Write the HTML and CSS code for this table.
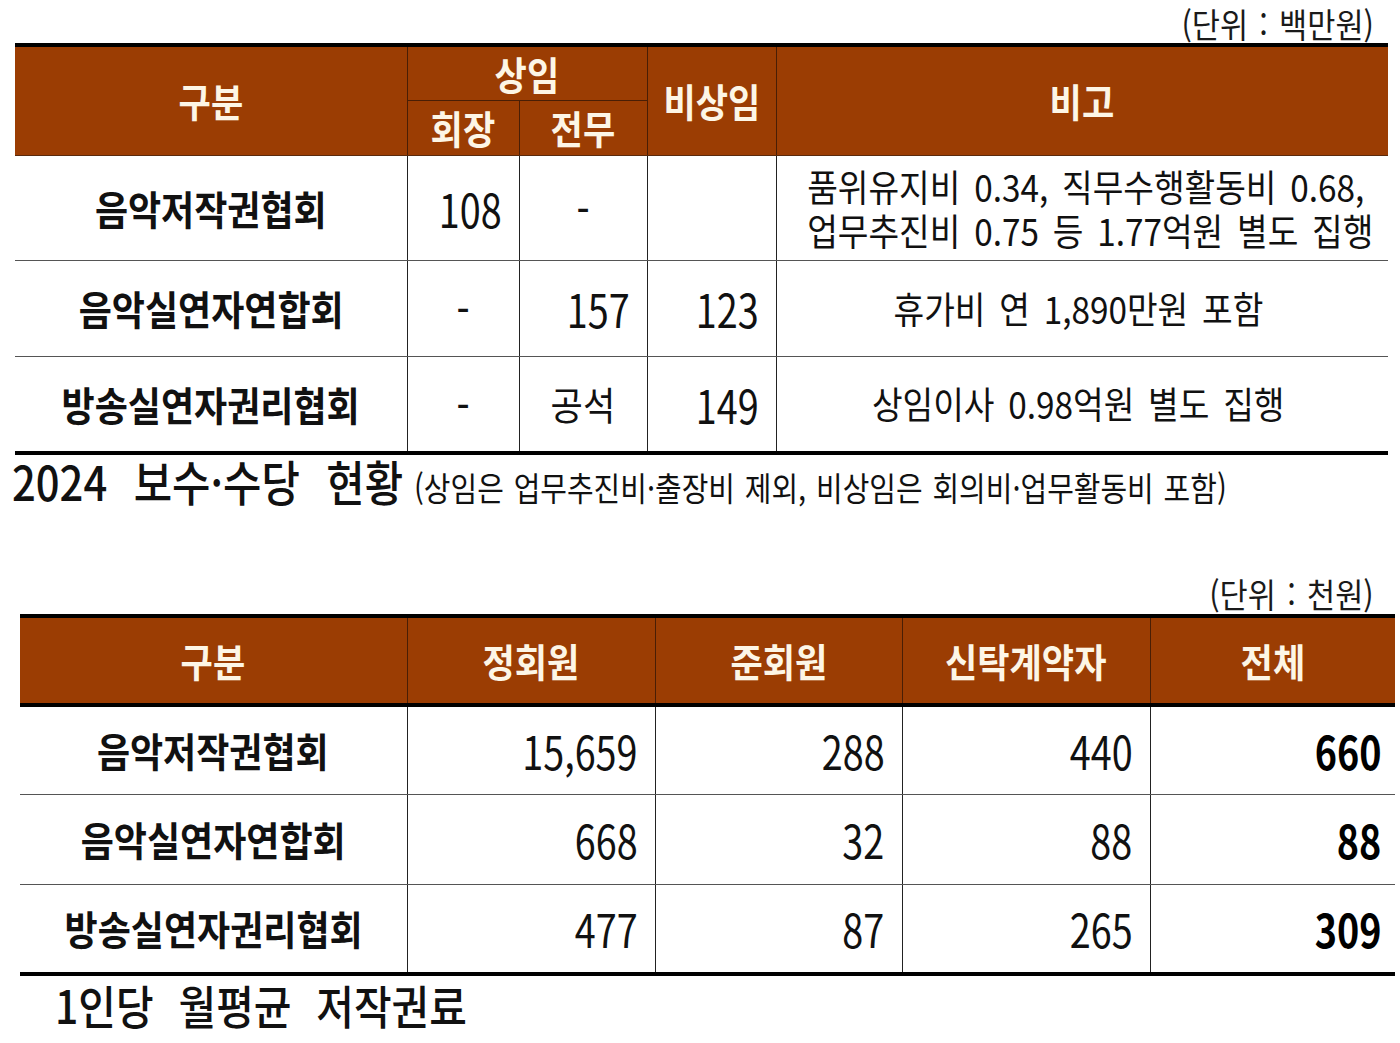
FILE: index.html
```html
<!DOCTYPE html>
<html lang="ko">
<head>
<meta charset="utf-8">
<title>보수·수당 현황</title>
<link rel="stylesheet" href="styles.css">
</head>
<body>
<div class="page">
  <div class="unit unit1"><span class="sx orr">(단위 : 백만원)</span></div>
  <table class="tbl t1">
    <colgroup>
      <col class="a1"><col class="a2"><col class="a3"><col class="a4"><col class="a5">
    </colgroup>
    <thead>
      <tr class="h1">
        <th rowspan="2"><span class="sx">구분</span></th>
        <th colspan="2" class="grp"><span class="sx">상임</span></th>
        <th rowspan="2"><span class="sx">비상임</span></th>
        <th rowspan="2"><span class="sx">비고</span></th>
      </tr>
      <tr class="h2">
        <th><span class="sx">회장</span></th>
        <th><span class="sx">전무</span></th>
      </tr>
    </thead>
    <tbody>
      <tr class="r1">
        <td class="name"><span class="sx">음악저작권협회</span></td>
        <td class="num rt"><span class="sx nx orr">108</span></td>
        <td class="num ctr"><span class="sx nx">-</span></td>
        <td class="num"></td>
        <td class="note"><div class="sx">품위유지비 0.34, 직무수행활동비 0.68,</div><div class="sx">업무추진비 0.75 등 1.77억원 별도 집행</div></td>
      </tr>
      <tr class="r2">
        <td class="name"><span class="sx">음악실연자연합회</span></td>
        <td class="num ctr"><span class="sx nx">-</span></td>
        <td class="num rt"><span class="sx nx orr">157</span></td>
        <td class="num rt"><span class="sx nx orr">123</span></td>
        <td class="note"><span class="sx">휴가비 연 1,890만원 포함</span></td>
      </tr>
      <tr class="r3">
        <td class="name"><span class="sx">방송실연자권리협회</span></td>
        <td class="num ctr"><span class="sx nx">-</span></td>
        <td class="num ctr txt"><span class="sx">공석</span></td>
        <td class="num rt"><span class="sx nx orr">149</span></td>
        <td class="note"><span class="sx">상임이사 0.98억원 별도 집행</span></td>
      </tr>
    </tbody>
  </table>
  <div class="cap cap1"><span class="sx orl cx"><span class="big">2024 보수·수당 현황</span> <span class="small">(상임은 업무추진비·출장비 제외, 비상임은 회의비·업무활동비 포함)</span></span></div>

  <div class="unit unit2"><span class="sx orr">(단위 : 천원)</span></div>
  <table class="tbl t2">
    <colgroup>
      <col class="b1"><col class="b2"><col class="b3"><col class="b4"><col class="b5">
    </colgroup>
    <thead>
      <tr class="h">
        <th><span class="sx">구분</span></th>
        <th><span class="sx">정회원</span></th>
        <th><span class="sx">준회원</span></th>
        <th><span class="sx">신탁계약자</span></th>
        <th><span class="sx">전체</span></th>
      </tr>
    </thead>
    <tbody>
      <tr class="s1">
        <td class="name"><span class="sx">음악저작권협회</span></td>
        <td class="num rt"><span class="sx nx orr">15,659</span></td>
        <td class="num rt"><span class="sx nx orr">288</span></td>
        <td class="num rt"><span class="sx nx orr">440</span></td>
        <td class="num rt tot"><span class="sx nx orr">660</span></td>
      </tr>
      <tr class="s2">
        <td class="name"><span class="sx">음악실연자연합회</span></td>
        <td class="num rt"><span class="sx nx orr">668</span></td>
        <td class="num rt"><span class="sx nx orr">32</span></td>
        <td class="num rt"><span class="sx nx orr">88</span></td>
        <td class="num rt tot"><span class="sx nx orr">88</span></td>
      </tr>
      <tr class="s3">
        <td class="name"><span class="sx">방송실연자권리협회</span></td>
        <td class="num rt"><span class="sx nx orr">477</span></td>
        <td class="num rt"><span class="sx nx orr">87</span></td>
        <td class="num rt"><span class="sx nx orr">265</span></td>
        <td class="num rt tot"><span class="sx nx orr">309</span></td>
      </tr>
    </tbody>
  </table>
  <div class="cap cap2"><span class="sx orl c2x">1인당 월평균 저작권료</span></div>
</div>
</body>
</html>
```

FILE: styles.css
```css
* { box-sizing: border-box; }
html, body { margin: 0; padding: 0; background: #fff; }
body {
  font-family: "Noto Sans CJK KR", "Noto Sans", sans-serif;
  color: #111;
}
.page { width: 1400px; }

.sx {
  display: inline-block;
  white-space: nowrap;
  transform: scaleX(0.9);
  transform-origin: center;
}
.sx.nx { transform: scaleX(0.82); }
.orr { transform-origin: right center; }
.orl { transform-origin: left center; }

/* unit labels */
.unit {
  text-align: right;
  font-size: 34px;
  line-height: 38px;
  color: #1a1a1a;
  word-spacing: 3px;
}
.unit1 { height: 43px; padding: 5px 26px 0 0; }
.unit2 { height: 39px; padding: 0 26px 0 0; }

/* tables */
.tbl {
  border-collapse: collapse;
  table-layout: fixed;
  border-top: 4px solid #000;
}
.tbl th {
  background: #9b3d03;
  color: #fdf6e6;
  font-weight: 700;
  font-size: 39px;
  line-height: 1;
  padding: 0;
  border-left: 1px solid #4a1e05;
  border-right: 1px solid #4a1e05;
  vertical-align: middle;
  text-align: center;
}
.tbl td {
  padding: 0;
  line-height: 1;
  vertical-align: middle;
  border: 1px solid #555;
  border-right-color: #222;
  border-left-color: #222;
}
.tbl tr > :first-child { border-left: none; }
.tbl tr > :last-child { border-right: none; }

.name {
  text-align: center;
  font-size: 40px;
  font-weight: 700;
  color: #111;
}
.num {
  font-size: 46px;
  font-weight: 400;
  color: #111;
}
.num.txt { font-size: 39px; }
.ctr { text-align: center; }
.rt { text-align: right; padding-right: 17px !important; }
.tot { font-weight: 700; color: #000; padding-right: 14px !important; }
.note {
  text-align: center;
  font-size: 37px;
  color: #111;
  word-spacing: 5px;
  padding-right: 8px !important;
}
.note div.sx { display: block; line-height: 44px; }

/* table 1 */
.t1 {
  margin-left: 15px;
  width: 1373px;
  border-bottom: 4px solid #000;
}
.a1 { width: 392px; }
.a2 { width: 112px; }
.a3 { width: 128px; }
.a4 { width: 129px; }
.a5 { width: 612px; }
.t1 .h1 th { height: 55px; }
.t1 .h2 th { height: 55px; border-top: 1px solid #4a1e05; }
.t1 .grp { border-bottom: 1px solid #4a1e05; }
.t1 thead tr:last-child th, .t1 thead th[rowspan] { border-bottom: 1px solid #5a2a0c; }
.t1 .r1 td { height: 105px; }
.t1 .r2 td { height: 96px; }
.t1 .r3 td { height: 97px; border-bottom: none; }
.t1 tbody tr:first-child td { border-top: none; }

/* captions */
.cap { white-space: nowrap; color: #111; }
.cx { transform: scaleX(0.87); }
.cap1 { height: 120px; padding-left: 12px; line-height: 50px; }
.cap1 .big { font-size: 48px; font-weight: 500; word-spacing: 17px; }
.cap1 .small { font-size: 33.3px; font-weight: 400; word-spacing: 2px; margin-left: 8px; }

/* table 2 */
.t2 {
  margin-left: 20px;
  width: 1375px;
  border-bottom: 4px solid #000;
}
.b1 { width: 387px; }
.b2 { width: 248px; }
.b3 { width: 247px; }
.b4 { width: 248px; }
.b5 { width: 245px; }
.t2 th { font-size: 39px; }
.t2 .h th { height: 89px; border-bottom: 4px solid #000; }
.t2 .s1 td { height: 89px; border-top: none; }
.t2 .s2 td { height: 90px; }
.t2 .s3 td { height: 90px; border-bottom: none; }

.cap2 {
  padding-left: 55px;
  font-size: 46px;
  font-weight: 500;
  line-height: 56px;
}
.c2x { transform: scaleX(0.89); word-spacing: 15px; }
```
